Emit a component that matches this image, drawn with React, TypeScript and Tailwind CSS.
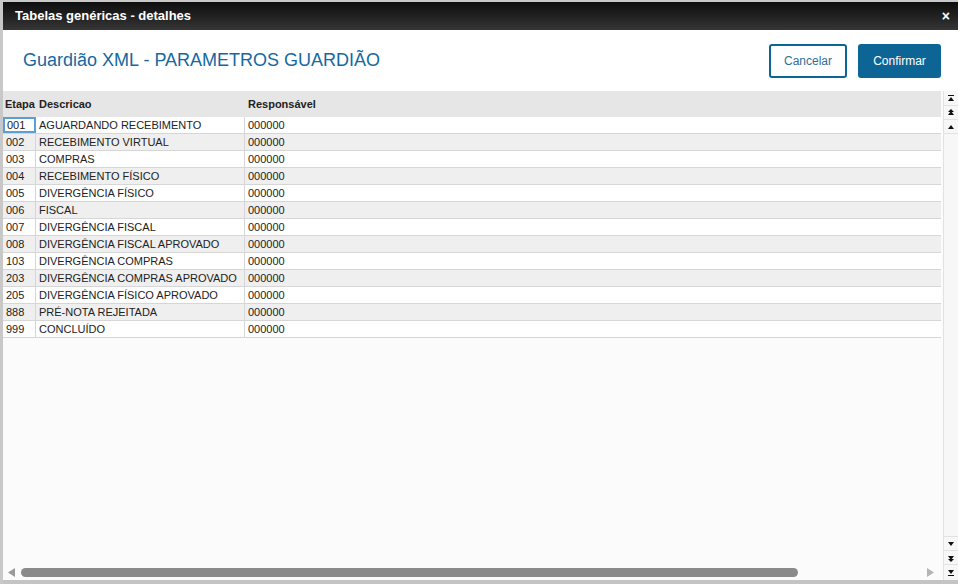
const etapas = [
  { cod: "001", desc: "AGUARDANDO RECEBIMENTO" },
  { cod: "002", desc: "RECEBIMENTO VIRTUAL" },
  { cod: "003", desc: "COMPRAS" },
  { cod: "004", desc: "RECEBIMENTO FÍSICO" },
  { cod: "005", desc: "DIVERGÊNCIA FÍSICO" },
  { cod: "006", desc: "FISCAL" },
  { cod: "007", desc: "DIVERGÊNCIA FISCAL" },
  { cod: "008", desc: "DIVERGÊNCIA FISCAL APROVADO" },
  { cod: "103", desc: "DIVERGÊNCIA COMPRAS" },
  { cod: "203", desc: "DIVERGÊNCIA COMPRAS APROVADO" },
  { cod: "205", desc: "DIVERGÊNCIA FÍSICO APROVADO" },
  { cod: "888", desc: "PRÉ-NOTA REJEITADA" },
  { cod: "999", desc: "CONCLUÍDO" },
];

function Arrow({ dir, bars = 0 }: { dir: "up" | "down"; bars?: number }) {
  const tri = dir === "up" ? "M1 6 L4 2 L7 6 Z" : "M1 2 L4 6 L7 2 Z";
  return (
    <svg width="8" height="8" viewBox="0 0 8 8">
      {bars === 1 && <rect x="1" y={dir === "up" ? 0 : 7} width="6" height="1" fill="#111" />}
      {bars === 2 && (
        <path d={dir === "up" ? "M1 3 L4 0 L7 3 Z" : "M1 5 L4 8 L7 5 Z"} fill="#111" />
      )}
      <path d={tri} fill="#111" />
    </svg>
  );
}

function ScrollBtn({ children, last }: { children: React.ReactNode; last?: boolean }) {
  return (
    <div
      className={`h-[14px] flex items-center justify-center ${last ? "" : "border-b border-[#e2e2e2]"}`}
    >
      {children}
    </div>
  );
}

export default function App() {
  return (
    <div
      className="w-[958px] h-[584px] bg-[#c8c8c8] pl-[3px] pt-[2px] flex overflow-hidden"
      style={{ fontFamily: '"Liberation Sans", Arial, sans-serif' }}
    >
      <div className="flex-1 flex flex-col bg-white">
        {/* title bar */}
        <div className="h-[28px] shrink-0 bg-gradient-to-b from-[#0e0e0e] to-[#363636] flex items-center justify-between pl-[12px] pr-[8px] text-white">
          <span className="text-[13px] font-bold">Tabelas genéricas - detalhes</span>
          <span className="text-[14px] font-bold leading-none">×</span>
        </div>

        {/* header */}
        <div className="h-[61px] shrink-0 flex items-center justify-between pl-[20px] pr-[17px]">
          <h1 className="text-[18px] text-[#1469a0]">Guardião XML - PARAMETROS GUARDIÃO</h1>
          <div className="flex gap-[11px]">
            <button className="w-[78px] h-[34px] rounded-[3px] border-2 border-[#0d6596] bg-white text-[12px] text-[#2d6f96]">
              Cancelar
            </button>
            <button className="w-[83px] h-[34px] rounded-[3px] bg-[#0d6596] text-[12px] text-white">
              Confirmar
            </button>
          </div>
        </div>

        {/* grid + vertical scroll */}
        <div className="flex-1 flex min-h-0">
          <div className="flex-1 flex flex-col bg-[#fbfbfb] pr-[2px]">
            <div className="h-[26px] shrink-0 bg-[#e6e6e6] flex items-center text-[11px] font-bold text-[#222]">
              <div className="w-[33px] pl-[2px]">Etapa</div>
              <div className="w-[209px] pl-[3px]">Descricao</div>
              <div className="flex-1 pl-[3px]">Responsável</div>
            </div>
            {etapas.map((e, i) => (
              <div
                key={e.cod}
                className={`h-[17px] shrink-0 flex text-[11px] text-[#222] border-b border-[#d6d6d6] ${
                  i % 2 === 0 ? "bg-white" : "bg-[#efefef]"
                }`}
              >
                <div
                  className={
                    i === 0
                      ? "w-[33px] flex items-center pl-[2px] border-2 border-[#5aa0d8]"
                      : "w-[33px] flex items-center pl-[3px] border-r border-[#d6d6d6]"
                  }
                >
                  {e.cod}
                </div>
                <div className="w-[209px] flex items-center pl-[3px] border-r border-[#d6d6d6]">{e.desc}</div>
                <div className="flex-1 flex items-center pl-[3px]">000000</div>
              </div>
            ))}
            <div className="flex-1" />
            {/* horizontal scroll */}
            <div className="h-[16px] shrink-0 flex items-center pl-[5px] pr-[6px] gap-[5px]">
              <svg width="8" height="9" viewBox="0 0 8 9">
                <path d="M7 0 L0 4.5 L7 9 Z" fill="#9a9a9a" />
              </svg>
              <div className="flex-1 flex">
                <div className="w-[777px] h-[9px] rounded-full bg-[#8a8a8a]" />
              </div>
              <svg width="8" height="9" viewBox="0 0 8 9">
                <path d="M0 0 L7 4.5 L0 9 Z" fill="#b4b4b4" />
              </svg>
            </div>
          </div>
          <div className="w-[15px] flex flex-col justify-between bg-[#f7f7f7] border-l border-[#e2e2e2] pt-[1px] pb-[1px]">
            <div>
              <ScrollBtn>
                <Arrow dir="up" bars={1} />
              </ScrollBtn>
              <ScrollBtn>
                <Arrow dir="up" bars={2} />
              </ScrollBtn>
              <ScrollBtn>
                <Arrow dir="up" />
              </ScrollBtn>
            </div>
            <div className="border-t border-[#e2e2e2]">
              <ScrollBtn>
                <Arrow dir="down" />
              </ScrollBtn>
              <ScrollBtn>
                <Arrow dir="down" bars={2} />
              </ScrollBtn>
              <ScrollBtn last>
                <Arrow dir="down" bars={1} />
              </ScrollBtn>
            </div>
          </div>
        </div>
        <div className="h-[4px] shrink-0 bg-[#c4c4c4]" />
      </div>
    </div>
  );
}
